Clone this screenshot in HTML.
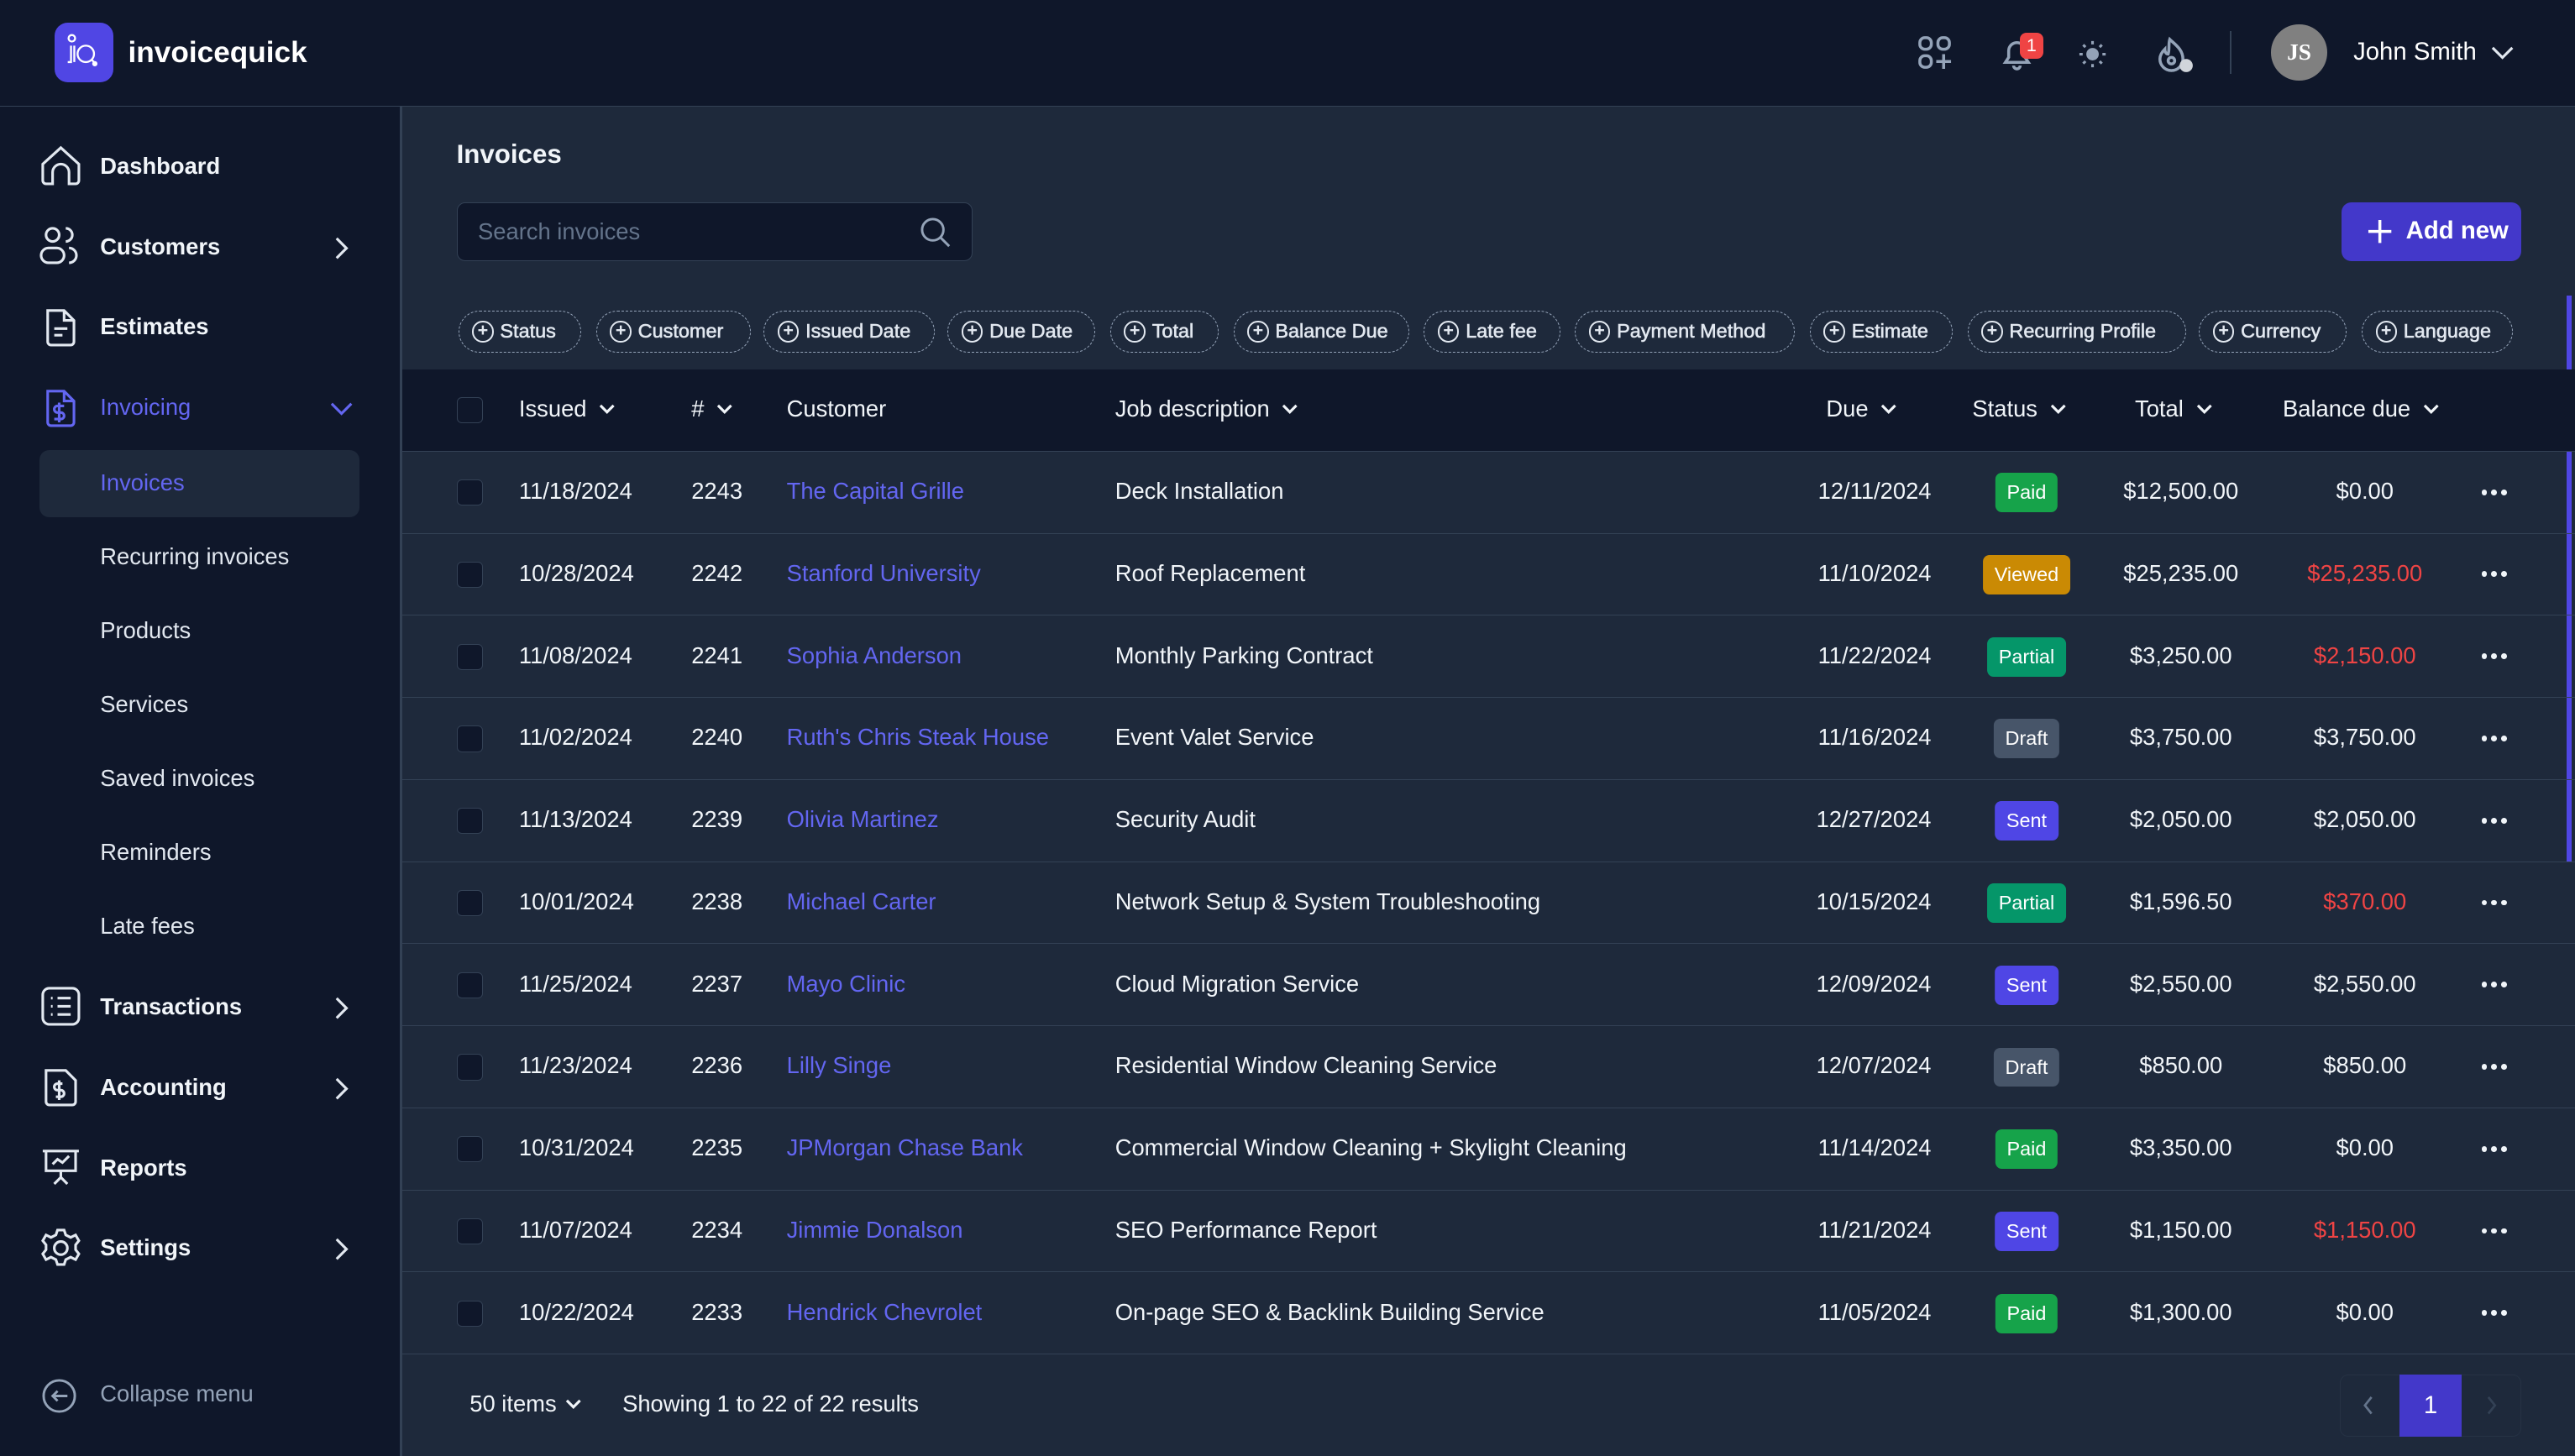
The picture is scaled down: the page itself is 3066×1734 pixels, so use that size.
<!DOCTYPE html>
<html><head><meta charset="utf-8"><style>
*{box-sizing:border-box;margin:0;padding:0}
html,body{width:3066px;height:1734px;overflow:hidden;background:#0f172a}
#z{zoom:1.9554;width:1568px;height:887px;position:relative;font-family:"Liberation Sans",sans-serif;color:#f1f5f9;background:#0f172a;overflow:hidden}
.a{position:absolute}
.top{left:0;top:0;width:1568px;height:65px;border-bottom:1px solid #334155;background:#0f172a}
.side{left:0;top:65px;width:245px;height:822px;border-right:2px solid #334155;background:#0f172a}
.main{left:245px;top:65px;width:1323px;height:822px;background:#1e293b}
.nav{left:61px;font-size:14px;font-weight:bold;color:#f1f5f9}
.sub{left:61px;font-size:14px;color:#e2e8f0}
.ic{left:24px;width:26px;height:26px}
.chev{left:200px}
.chip{top:189px;height:26px;border:1px dashed #94a3b8;border-radius:13px;font-size:12px;color:#e2e8f0;padding:0 6px 0 8px;display:flex;align-items:center;gap:4px;white-space:nowrap;-webkit-text-stroke:0.3px #e2e8f0}
.chip i{display:inline-block;flex:none;width:13px;height:13px;border:1.3px solid #e2e8f0;border-radius:50%;font-style:normal;font-size:11px;line-height:10px;text-align:center;font-weight:bold;-webkit-text-stroke:0}
.th{top:225px;left:245px;width:1323px;height:50px;background:#0f172a;border-bottom:1px solid #334155}
.hc{top:241px;font-size:14px;color:#f1f5f9;display:flex;align-items:center;gap:7px;white-space:nowrap}
.row{left:245px;width:1323px;height:50px;border-bottom:1px solid #334155;font-size:14px;color:#f1f5f9}
.row span{position:absolute;top:16px;white-space:nowrap}
.cb{position:absolute;left:33px;top:17px;width:16px;height:16px;border:1px solid #334155;border-radius:3px;background:#0f172a}
.b{position:absolute;top:13px;height:24px;border-radius:4px;font-size:12px;line-height:24px;padding:0 7px;color:#fff;transform:translateX(-50%)}
.cu{color:#6366f1}
.red{color:#ef4444}
.dt{position:absolute;left:1266px;top:23px;width:16px;height:4px}
.dt b{position:absolute;top:0;width:3.5px;height:3.5px;border-radius:50%;background:#f1f5f9}
</style></head><body><div id="z">
<div class="a top"></div>
<div class="a" style="left:33px;top:14px;width:36px;height:36px;border-radius:8px;background:#5046e4"></div>
<svg class="a" style="left:33px;top:14px" width="36" height="36" viewBox="0 0 36 36" fill="none" stroke="#fff" stroke-width="1.2"><circle cx="10.5" cy="9.5" r="2"/><path d="M10 14v10h-2M12 14v10"/><circle cx="19" cy="19" r="5"/><path d="M22.5 22.5l2 2"/><circle cx="24.5" cy="25" r="1" fill="#fff"/></svg>
<div class="a" style="left:78px;top:22px;font-size:18px;font-weight:bold;color:#fff">invoicequick</div>
<svg class="a" style="left:1167px;top:21px" width="22" height="22" viewBox="0 0 22 22" fill="none" stroke="#94a3b8" stroke-width="1.8"><rect x="2" y="2" width="7" height="7" rx="3"/><rect x="13" y="2" width="7" height="7" rx="3"/><rect x="2" y="13" width="7" height="7" rx="3"/><path d="M16.5 12v9M12 16.5h9"/></svg>
<svg class="a" style="left:1216px;top:21px" width="24" height="24" viewBox="0 0 24 24" fill="none" stroke="#94a3b8" stroke-width="1.8"><path d="M5 17h14l-2-3V10a5 5 0 0 0-10 0v4z M10 19a2 2 0 0 0 4 0"/></svg>
<div class="a" style="left:1230px;top:20px;width:14px;height:16px;border-radius:4px;background:#ef4444;font-size:11px;color:#fff;text-align:center;line-height:16px">1</div>
<svg class="a" style="left:1264px;top:23px" width="20" height="20" viewBox="0 0 20 20" stroke="#94a3b8" stroke-width="1.6" fill="#94a3b8"><circle cx="10" cy="10" r="3"/><path d="M10 2v2M10 16v2M2 10h2M16 10h2M4.3 4.3l1.4 1.4M14.3 14.3l1.4 1.4M4.3 15.7l1.4-1.4M14.3 5.7l1.4-1.4"/></svg>
<svg class="a" style="left:1310px;top:20px" width="28" height="28" viewBox="0 0 28 28" fill="none" stroke="#94a3b8" stroke-width="1.8"><path d="M11 4c3 3 8 6 8 12a7 7 0 0 1-14 0c0-3 2-5 3-6 0 2 1 3 2 3 1-3 0-6 1-9z"/><circle cx="12" cy="17" r="2"/><circle cx="21" cy="20" r="4" fill="#d1d5db" stroke="none"/></svg>
<div class="a" style="left:1358px;top:19px;width:1px;height:26px;background:#334155"></div>
<div class="a" style="left:1383px;top:15px;width:34px;height:34px;border-radius:50%;background:#808080;color:#fff;font-family:'Liberation Serif',serif;font-weight:bold;font-size:14px;text-align:center;line-height:34px">JS</div>
<div class="a" style="left:1433px;top:23px;font-size:15px;color:#fff">John Smith</div>
<svg class="a" style="left:1516px;top:26px" width="16" height="12" viewBox="0 0 16 12" fill="none" stroke="#e2e8f0" stroke-width="1.6"><path d="M2 3l6 6 6-6"/></svg>
<div class="a side"></div>
<svg class="a ic" style="top:88px" viewBox="0 0 26 26" fill="none" stroke="#e2e8f0" stroke-width="1.6"><path d="M2 12L13 2l11 10v10a2 2 0 0 1-2 2h-4v-7a5 5 0 0 0-10 0v7H4a2 2 0 0 1-2-2z"/></svg>
<div class="a nav" style="top:93px">Dashboard</div>
<svg class="a ic" style="top:137px" viewBox="0 0 26 26" fill="none" stroke="#e2e8f0" stroke-width="1.6"><circle cx="8" cy="6" r="4"/><path d="M16 2a4 4 0 0 1 0 8"/><rect x="1" y="14" width="14" height="9" rx="4.5"/><path d="M18 14a4.5 4.5 0 0 1 0 9"/></svg>
<div class="a nav" style="top:142px">Customers</div>
<svg class="a chev" style="top:143px" width="16" height="16" viewBox="0 0 16 16" fill="none" stroke="#e2e8f0" stroke-width="1.6"><path d="M5 2l6 6-6 6"/></svg>
<svg class="a ic" style="top:186px" viewBox="0 0 26 26" fill="none" stroke="#e2e8f0" stroke-width="1.6"><path d="M5 3h10l6 6v13a2 2 0 0 1-2 2H7a2 2 0 0 1-2-2z M15 3v6h6 M9 14h8M9 18h5"/></svg>
<div class="a nav" style="top:191px">Estimates</div>
<svg class="a ic" style="top:235px" viewBox="0 0 26 26" fill="none" stroke="#6366f1" stroke-width="1.6"><path d="M5 3h10l6 6v13a2 2 0 0 1-2 2H7a2 2 0 0 1-2-2z M15 3v6h6 M15 12h-4a2 2 0 0 0 0 4h2a2 2 0 0 1 0 4h-4M12 10v12"/></svg>
<div class="a nav" style="top:240px;color:#6366f1;font-weight:normal">Invoicing</div>
<svg class="a chev" style="top:241px" width="16" height="16" viewBox="0 0 16 16" fill="none" stroke="#6366f1" stroke-width="1.6"><path d="M2 5l6 6 6-6"/></svg>
<div class="a" style="left:24px;top:274px;width:195px;height:41px;border-radius:6px;background:#1e293b"></div>
<div class="a sub" style="top:286px;color:#6366f1">Invoices</div>
<div class="a sub" style="top:331px">Recurring invoices</div>
<div class="a sub" style="top:376px">Products</div>
<div class="a sub" style="top:421px">Services</div>
<div class="a sub" style="top:466px">Saved invoices</div>
<div class="a sub" style="top:511px">Reminders</div>
<div class="a sub" style="top:556px">Late fees</div>
<svg class="a ic" style="top:600px" viewBox="0 0 26 26" fill="none" stroke="#e2e8f0" stroke-width="1.6"><rect x="2" y="2" width="22" height="22" rx="4"/><path d="M7 8h1M11 8h8M7 13h1M11 13h8M7 18h1M11 18h8"/></svg>
<div class="a nav" style="top:605px">Transactions</div>
<svg class="a chev" style="top:606px" width="16" height="16" viewBox="0 0 16 16" fill="none" stroke="#e2e8f0" stroke-width="1.6"><path d="M5 2l6 6-6 6"/></svg>
<svg class="a ic" style="top:649px" viewBox="0 0 26 26" fill="none" stroke="#e2e8f0" stroke-width="1.6"><path d="M4 3h12l6 6v13a2 2 0 0 1-2 2H6a2 2 0 0 1-2-2z M14 11h-3a2 2 0 0 0 0 4h2a2 2 0 0 1 0 4h-3M12 9v12"/></svg>
<div class="a nav" style="top:654px">Accounting</div>
<svg class="a chev" style="top:655px" width="16" height="16" viewBox="0 0 16 16" fill="none" stroke="#e2e8f0" stroke-width="1.6"><path d="M5 2l6 6-6 6"/></svg>
<svg class="a ic" style="top:698px" viewBox="0 0 26 26" fill="none" stroke="#e2e8f0" stroke-width="1.6"><path d="M2 3h22M4 3v12h18V3M13 15v4M9 23l4-4 4 4M8 11l3-3 3 2 4-4"/></svg>
<div class="a nav" style="top:703px">Reports</div>
<svg class="a ic" style="top:747px" viewBox="0 0 26 26" fill="none" stroke="#e2e8f0" stroke-width="1.6"><circle cx="13" cy="13" r="4"/><path d="M11 2h4l1 3 3 1.5 3-1.5 2 3.5-2 2.5v3l2 2.5-2 3.5-3-1.5-3 1.5-1 3h-4l-1-3-3-1.5-3 1.5-2-3.5 2-2.5v-3L2 8.5 4 5l3 1.5L10 5z"/></svg>
<div class="a nav" style="top:752px">Settings</div>
<svg class="a chev" style="top:753px" width="16" height="16" viewBox="0 0 16 16" fill="none" stroke="#e2e8f0" stroke-width="1.6"><path d="M5 2l6 6-6 6"/></svg>
<svg class="a" style="left:25px;top:839px" width="22" height="22" viewBox="0 0 22 22" fill="none" stroke="#94a3b8" stroke-width="1.5"><circle cx="11" cy="11" r="9.5"/><path d="M16 11H7M10 8l-3 3 3 3"/></svg>
<div class="a" style="left:61px;top:841px;font-size:14px;color:#94a3b8">Collapse menu</div>
<div class="a main"></div>
<div class="a" style="left:1563px;top:180px;width:3px;height:345px;background:#4f46e5"></div>
<div class="a" style="left:278px;top:85px;font-size:16px;font-weight:bold;color:#f1f5f9">Invoices</div>
<div class="a" style="left:278px;top:123px;width:314px;height:36px;border:1px solid #334155;border-radius:5px;background:#0f172a"></div>
<div class="a" style="left:291px;top:133px;font-size:14px;color:#64748b">Search invoices</div>
<svg class="a" style="left:560px;top:132px" width="19" height="19" viewBox="0 0 19 19" fill="none" stroke="#94a3b8" stroke-width="1.5"><circle cx="8" cy="8" r="6.5"/><path d="M13 13l5 5"/></svg>
<div class="a" style="left:1426px;top:123px;width:109px;height:36px;border-radius:6px;background:#4338ca"></div>
<svg class="a" style="left:1441px;top:133px" width="16" height="16" viewBox="0 0 16 16" stroke="#fff" stroke-width="1.8"><path d="M8 1v14M1 8h14"/></svg>
<div class="a" style="left:1465px;top:132px;font-size:15px;font-weight:bold;color:#fff">Add new</div>
<div class="a chip" style="left:279px;width:75px"><i>+</i>Status</div>
<div class="a chip" style="left:363px;width:94px"><i>+</i>Customer</div>
<div class="a chip" style="left:465px;width:104px"><i>+</i>Issued Date</div>
<div class="a chip" style="left:577px;width:90px"><i>+</i>Due Date</div>
<div class="a chip" style="left:676px;width:66px"><i>+</i>Total</div>
<div class="a chip" style="left:751px;width:107px"><i>+</i>Balance Due</div>
<div class="a chip" style="left:867px;width:83px"><i>+</i>Late fee</div>
<div class="a chip" style="left:959px;width:134px"><i>+</i>Payment Method</div>
<div class="a chip" style="left:1102px;width:87px"><i>+</i>Estimate</div>
<div class="a chip" style="left:1198px;width:133px"><i>+</i>Recurring Profile</div>
<div class="a chip" style="left:1339px;width:90px"><i>+</i>Currency</div>
<div class="a chip" style="left:1438px;width:92px"><i>+</i>Language</div>
<div class="a th"><div class="cb" style="top:17px"></div></div>
<div id="hdr"></div>
<div id="rows"></div>
<script>
var cv='<svg width="11" height="8" viewBox="0 0 11 8" fill="none" stroke="#f1f5f9" stroke-width="1.6"><path d="M1.5 2l4 4 4-4"/></svg>';
var hs=[[316,"Issued",1],[421,"#",1],[479,"Customer",0],[679,"Job description",1],[1112,"Due",1],[1201,"Status",1],[1300,"Total",1],[1390,"Balance due",1]];
var hh="";hs.forEach(function(x){hh+='<div class="a hc" style="left:'+x[0]+'px"><span>'+x[1]+'</span>'+(x[2]?cv:'')+'</div>';});
document.getElementById("hdr").innerHTML=hh;
var d=[["11/18/2024","2243","The Capital Grille","Deck Installation","12/11/2024","Paid","$12,500.00","$0.00",0],
["10/28/2024","2242","Stanford University","Roof Replacement","11/10/2024","Viewed","$25,235.00","$25,235.00",1],
["11/08/2024","2241","Sophia Anderson","Monthly Parking Contract","11/22/2024","Partial","$3,250.00","$2,150.00",1],
["11/02/2024","2240","Ruth's Chris Steak House","Event Valet Service","11/16/2024","Draft","$3,750.00","$3,750.00",0],
["11/13/2024","2239","Olivia Martinez","Security Audit","12/27/2024","Sent","$2,050.00","$2,050.00",0],
["10/01/2024","2238","Michael Carter","Network Setup & System Troubleshooting","10/15/2024","Partial","$1,596.50","$370.00",1],
["11/25/2024","2237","Mayo Clinic","Cloud Migration Service","12/09/2024","Sent","$2,550.00","$2,550.00",0],
["11/23/2024","2236","Lilly Singe","Residential Window Cleaning Service","12/07/2024","Draft","$850.00","$850.00",0],
["10/31/2024","2235","JPMorgan Chase Bank","Commercial Window Cleaning + Skylight Cleaning","11/14/2024","Paid","$3,350.00","$0.00",0],
["11/07/2024","2234","Jimmie Donalson","SEO Performance Report","11/21/2024","Sent","$1,150.00","$1,150.00",1],
["10/22/2024","2233","Hendrick Chevrolet","On-page SEO & Backlink Building Service","11/05/2024","Paid","$1,300.00","$0.00",0]];
var col={Paid:"#16a34a",Viewed:"#ca8a04",Partial:"#059669",Draft:"#475569",Sent:"#4f46e5"};
var h="";d.forEach(function(r,i){var t=275+i*50;
h+='<div class="a row" style="top:'+t+'px"><div class="cb"></div><span style="left:71px">'+r[0]+'</span><span style="left:176px">'+r[1]+'</span><span class="cu" style="left:234px">'+r[2].replace("&","&amp;")+'</span><span style="left:434px">'+r[3].replace("&","&amp;")+'</span><span style="right:392px">'+r[4]+'</span><div class="b" style="left:989px;background:'+col[r[5]]+'">'+r[5]+'</div><span style="left:1083px;transform:translateX(-50%)">'+r[6]+'</span><span class="'+(r[8]?'red':'')+'" style="left:1195px;transform:translateX(-50%)">'+r[7]+'</span><div class="dt"><b style="left:0"></b><b style="left:6px"></b><b style="left:12px"></b></div></div>';});
document.getElementById("rows").innerHTML=h;
</script>
<div class="a" style="left:286px;top:847px;font-size:14px;display:flex;align-items:center;gap:5px">50 items <svg width="11" height="8" viewBox="0 0 11 8" fill="none" stroke="#f1f5f9" stroke-width="1.6"><path d="M1.5 2l4 4 4-4"/></svg></div>
<div class="a" style="left:379px;top:847px;font-size:14px">Showing 1 to 22 of 22 results</div>
<div class="a" style="left:1425px;top:837px;width:110px;height:38px;border:1px solid #263244;border-radius:5px"></div>
<div class="a" style="left:1461px;top:837px;width:38px;height:38px;background:#4338ca;color:#fff;font-size:15px;text-align:center;line-height:38px">1</div>
<svg class="a" style="left:1437px;top:849px" width="10" height="14" viewBox="0 0 10 14" fill="none" stroke="#64748b" stroke-width="1.4"><path d="M7 2L3 7l4 5"/></svg>
<svg class="a" style="left:1512px;top:849px" width="10" height="14" viewBox="0 0 10 14" fill="none" stroke="#334155" stroke-width="1.4"><path d="M3 2l4 5-4 5"/></svg>
</div></body></html>
